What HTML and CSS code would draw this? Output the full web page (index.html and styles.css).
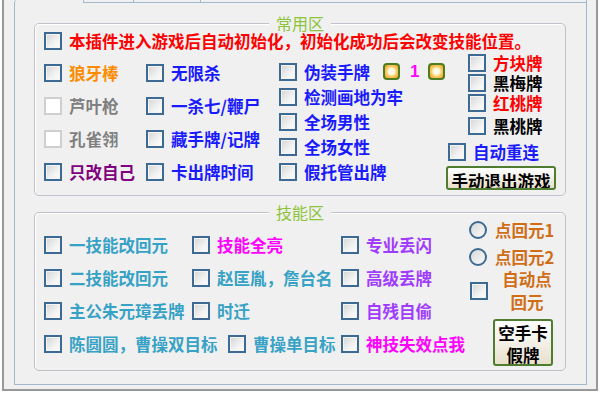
FILE: index.html
```html
<!DOCTYPE html>
<html lang="zh-CN">
<head>
    <meta charset="UTF-8">
    <meta name="viewport" content="width=device-width, initial-scale=1.0">
    <title>插件设置</title>
    <link rel="stylesheet" href="styles.css">
</head>
<body>
    <div class="window">
        <div class="tabs">
            <span class="tab tab-on"></span>
            <span class="tab tab-two"></span>
            <span class="tab tab-three"></span>
            <span class="tab tab-rest"></span>
        </div>
        <div class="page">
            <!-- 常用区 -->
            <div class="group group-common">
                <span class="group-title">常用区</span>
                <div class="opt red"><span class="box"></span>本插件进入游戏后自动初始化，初始化成功后会改变技能位置。</div>
                <div class="common-cols">
                    <div class="col col-wide">
                        <div class="opt orange"><span class="box"></span>狼牙棒</div>
                        <div class="opt gray"><span class="box box-off"></span>芦叶枪</div>
                        <div class="opt gray"><span class="box box-off"></span>孔雀翎</div>
                        <div class="opt purple"><span class="box"></span>只改自己</div>
                    </div>
                    <div class="col col-wide">
                        <div class="opt blue"><span class="box"></span>无限杀</div>
                        <div class="opt blue"><span class="box"></span>一杀七/鞭尸</div>
                        <div class="opt blue"><span class="box"></span>藏手牌/记牌</div>
                        <div class="opt blue"><span class="box"></span>卡出牌时间</div>
                    </div>
                    <div class="col col-mid">
                        <div class="opt blue"><span class="box"></span>伪装手牌<span class="pip"></span><span class="pip-num">1</span><span class="pip"></span></div>
                        <div class="opt blue"><span class="box"></span>检测画地为牢</div>
                        <div class="opt blue"><span class="box"></span>全场男性</div>
                        <div class="opt blue"><span class="box"></span>全场女性</div>
                        <div class="opt blue"><span class="box"></span>假托管出牌</div>
                    </div>
                    <div class="col col-cards">
                        <div class="opt card red"><span class="box"></span>方块牌</div>
                        <div class="opt card black"><span class="box"></span>黑梅牌</div>
                        <div class="opt card red"><span class="box"></span>红桃牌</div>
                        <div class="opt card card-last black"><span class="box"></span>黑桃牌</div>
                        <div class="opt reconnect blue"><span class="box"></span>自动重连</div>
                        <button class="btn btn-quit">手动退出游戏</button>
                    </div>
                </div>
            </div>

            <!-- 技能区 -->
            <div class="group group-skill">
                <span class="group-title">技能区</span>
                <div class="skill-rows">
                    <div class="row">
                        <div class="opt teal"><span class="box"></span>一技能改回元</div>
                        <div class="opt magenta"><span class="box"></span>技能全亮</div>
                        <div class="opt violet"><span class="box"></span>专业丢闪</div>
                    </div>
                    <div class="row">
                        <div class="opt teal"><span class="box"></span>二技能改回元</div>
                        <div class="opt teal"><span class="box"></span>赵匡胤，詹台名</div>
                        <div class="opt violet"><span class="box"></span>高级丢牌</div>
                    </div>
                    <div class="row">
                        <div class="opt teal"><span class="box"></span>主公朱元璋丢牌</div>
                        <div class="opt teal"><span class="box"></span>时迁</div>
                        <div class="opt violet"><span class="box"></span>自残自偷</div>
                    </div>
                    <div class="row row-last">
                        <div class="opt teal"><span class="box"></span>陈圆圆，曹操双目标</div>
                        <div class="opt teal"><span class="box"></span>曹操单目标</div>
                        <div class="opt magenta"><span class="box"></span>神技失效点我</div>
                    </div>
                </div>
                <div class="skill-side">
                    <div class="opt brown radio-row"><span class="dot"></span>点回元1</div>
                    <div class="opt brown radio-row radio-second"><span class="dot"></span>点回元2</div>
                    <div class="opt brown auto-row"><span class="box"></span><span class="auto-text">自动点<br>回元</span></div>
                    <button class="btn btn-empty">空手卡<br>假牌</button>
                </div>
            </div>
        </div>
    </div>
</body>
</html>
```

FILE: styles.css
```css
body {
    margin: 0;
    background: #fff;
    font-family: "Noto Sans CJK SC", "Noto Sans", sans-serif;
}
.window {
    box-sizing: border-box;
    width: 596px;
    height: 391px;
    margin-left: 2px;
    padding: 0 9px 0 10px;
    background: #f0f0f0;
    border: 2px solid #999;
    border-top: none;
}

/* tab strip, only the bottom of the tabs is visible */
.tabs {
    display: flex;
    height: 3px;
}
.tab {
    box-sizing: border-box;
    border-left: 1px solid #a3b8cc;
}
.tab-on {
    width: 69px;
    border-top-left-radius: 3px;
}
.tab-two {
    width: 50px;
    border-bottom: 1px solid #a3b8cc;
}
.tab-three {
    width: 67px;
    border-bottom: 1px solid #a3b8cc;
}
.tab-rest {
    flex: 1;
    border-bottom: 1px solid #a3b8cc;
    border-right: 1px solid #a3b8cc;
}
.page {
    box-sizing: border-box;
    height: 382px;
    border: 1px solid #a3b8cc;
    border-top: none;
    padding: 20px 0 0 19px;
}

/* group boxes */
.group {
    position: relative;
    box-sizing: border-box;
    width: 532px;
    border: 1px solid #c4bfc8;
    border-radius: 5px;
    box-shadow: inset 1px 1px 0 #fff;
    padding-left: 9px;
}
.group-common {
    height: 173px;
    padding-top: 7px;
}
.group-skill {
    height: 159px;
    margin-top: 16px;
    display: flex;
}
.group-title {
    position: absolute;
    top: -11px;
    left: 50%;
    transform: translateX(-50%);
    padding: 0 7px;
    background: #f0f0f0;
    color: #8dc43c;
    font-size: 16px;
    line-height: 20px;
}

/* check options */
.opt {
    display: flex;
    align-items: center;
    gap: 7px;
    height: 20px;
    font-size: 16.5px;
    font-weight: bold;
    line-height: 20px;
    white-space: nowrap;
}
.box {
    flex: none;
    box-sizing: border-box;
    width: 18px;
    height: 18px;
    border: 2px solid #3d6a93;
    background: linear-gradient(135deg, #d4d4d4, #f2f2f2 60%, #fdfdfd);
    box-shadow: inset 0 0 0 1px #f4f4f4;
}
.box-off {
    border-color: #cfcfcf;
    background: #fff;
    box-shadow: none;
}
.dot {
    flex: none;
    box-sizing: border-box;
    width: 18px;
    height: 18px;
    border: 2px solid #3d6a93;
    border-radius: 50%;
    background: linear-gradient(135deg, #d8d8d8, #fafafa);
}

.red { color: #ff0000; }
.orange { color: #ff8c00; }
.gray { color: #7f7f7f; }
.purple { color: #800080; }
.blue { color: #1a1aff; }
.black { color: #000; }
.teal { color: #37a2c6; }
.magenta { color: #ff00ff; }
.violet { color: #a03cff; }
.brown { color: #d06d16; }

/* 常用区 columns */
.common-cols {
    display: grid;
    grid-template-columns: 102px 133px 169px 1fr;
    margin-top: 2px;
}
.col-wide {
    padding-top: 3px;
}
.col-wide .opt {
    height: 33px;
}
.col-mid {
    padding-top: 6px;
}
.col-mid .opt {
    height: 25px;
}
.pip {
    flex: none;
    box-sizing: border-box;
    width: 17px;
    height: 17px;
    margin-left: 6px;
    border: 2px solid #4d7d22;
    border-radius: 4px;
    background: radial-gradient(circle, #fffbe9 30%, #f9cf6a 55%, #ee9a14);
}
.pip + .pip-num {
    margin-left: 3px;
}
.pip-num {
    color: #ff00ff;
    font-family: "Liberation Sans", sans-serif;
    font-size: 17px;
}
.pip-num + .pip {
    margin-left: 2px;
}
.card {
    margin-left: 20px;
}
.card-last {
    margin-top: 3px;
}
.reconnect {
    margin-top: 6px;
}

/* buttons */
.btn {
    display: block;
    box-sizing: border-box;
    padding: 0;
    border: 2px solid #4f7d30;
    border-radius: 3px;
    background: linear-gradient(#ffffff, #f5f2ec 45%, #e9dfcb);
    color: #000;
    font-family: inherit;
    font-size: 16.5px;
    font-weight: bold;
    text-align: center;
    overflow: hidden;
}
.btn-quit {
    width: 110px;
    height: 24px;
    margin: 4px 0 0 -2px;
    padding-top: 3px;
    line-height: 20px;
}
.btn-empty {
    width: 60px;
    height: 47px;
    margin: 5px 0 0 24px;
    padding-top: 1px;
    line-height: 22px;
}

/* 技能区 */
.skill-rows {
    width: 425px;
    padding-top: 15px;
}
.row {
    display: grid;
    grid-template-columns: 148px 149px auto;
    height: 33px;
    align-items: center;
}
.row-last {
    grid-template-columns: 184px 113px auto;
}
.skill-side {
    padding-top: 7px;
}
.radio-row {
    gap: 8px;
}
.radio-second {
    margin-top: 7px;
}
.auto-row {
    height: 46px;
    margin: 1px 0 0 1px;
    gap: 4px;
}
.auto-text {
    width: 70px;
    text-align: center;
    line-height: 23px;
}
```
